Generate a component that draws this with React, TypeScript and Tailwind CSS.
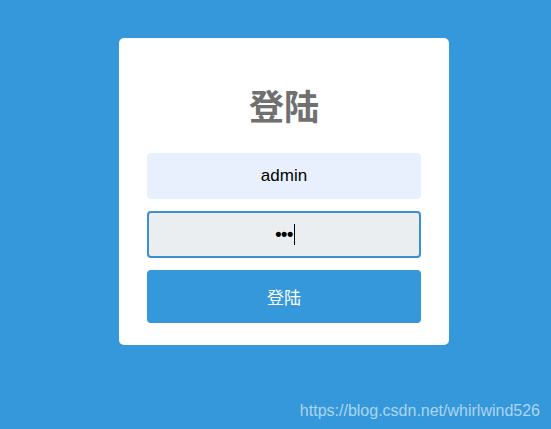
export default function App() {
  return (
    <div className="relative h-[429px] w-full overflow-hidden bg-[#3498db] pt-[38px]" style={{ fontFamily: '"Liberation Sans", "Noto Sans CJK SC", sans-serif' }}>
      <div className="ml-[119px] flex w-[330px] flex-col rounded-[5px] bg-white px-[28px] pb-[22px] pt-[47px]">
        <h1 className="mb-[28px] h-[40px] text-center text-[35px] font-bold leading-[40px] text-[#707070]" style={{ fontFamily: '"Noto Sans CJK SC", sans-serif' }}>
          登陆
        </h1>
        <div className="flex h-[46px] items-center justify-center rounded-[4px] bg-[#e8f0fe] text-[17px] text-black">
          admin
        </div>
        <div className="mt-[12px] flex h-[47px] items-center justify-center rounded-[4px] border-2 border-[#3b8fcc] bg-[#eaeef0] text-[18px] font-bold text-black">
          <span className="ml-[2px] tracking-[-0.5px]">•••</span>
          <span className="ml-[1px] inline-block h-[21px] w-px bg-black" />
        </div>
        <div className="mt-[12px] flex h-[53px] items-center justify-center rounded-[4px] bg-[#3498db] text-[17px] text-white" style={{ fontFamily: '"Noto Sans CJK SC", sans-serif' }}>
          登陆
        </div>
      </div>
      <div className="absolute bottom-[6px] right-[11px] text-[16px] text-white/60">
        https://blog.csdn.net/whirlwind526
      </div>
    </div>
  );
}
